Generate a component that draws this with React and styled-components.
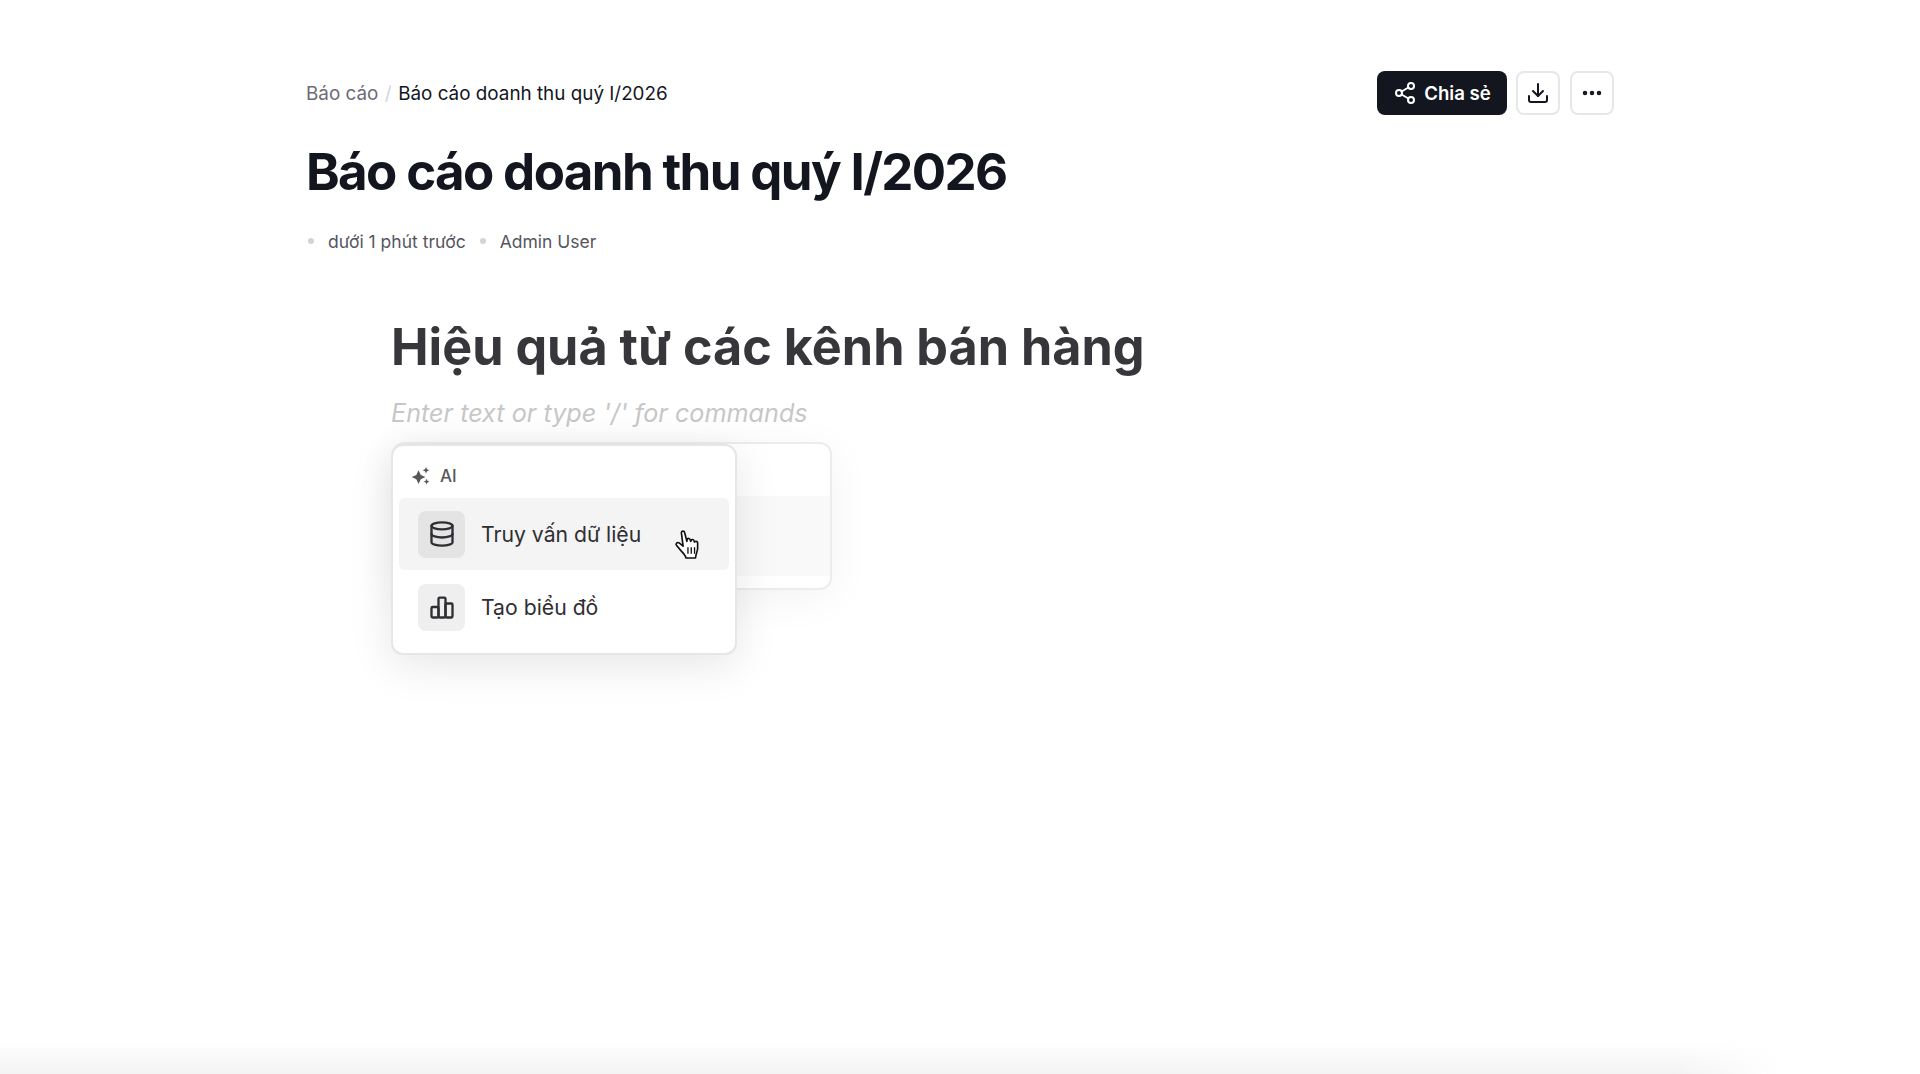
import React from "react";
import styled, { createGlobalStyle } from "styled-components";
import { Share2, Download, Ellipsis, Database } from "lucide-react";

const GlobalStyle = createGlobalStyle`
  html, body {
    margin: 0;
    padding: 0;
    background: #fff;
    font-family: Inter, "Noto Sans", sans-serif;
  }
`;

const Page = styled.div`
  position: relative;
  height: 1074px;
  overflow: hidden;
  padding: 71px 306px 0;
  box-sizing: border-box;
  background: #fff;
`;

const TopBar = styled.div`
  display: flex;
  justify-content: space-between;
  align-items: center;
  height: 44px;
`;

const Breadcrumb = styled.div`
  display: flex;
  align-items: center;
  gap: 6.5px;
  font-size: 18.85px;
  color: #6b6b76;
`;

const Separator = styled.span`
  color: #d1d5db;
`;

const Current = styled.span`
  color: #13151f;
`;

const Actions = styled.div`
  display: flex;
  gap: 10px;
`;

const ShareButton = styled.button`
  display: flex;
  align-items: center;
  justify-content: center;
  gap: 7px;
  width: 130px;
  height: 44px;
  margin-right: -1px;
  border: 0;
  border-radius: 8px;
  background: #13151f;
  color: #fff;
  font: 600 18.6px Inter, sans-serif;
`;

const IconButton = styled.button`
  display: flex;
  align-items: center;
  justify-content: center;
  width: 44px;
  height: 44px;
  padding: 0;
  border: 2px solid #e5e7eb;
  border-radius: 8px;
  background: #fff;
  color: #13151f;
`;

const Title = styled.h1`
  margin: 27px 0 0;
  font-size: 51px;
  line-height: 60px;
  font-weight: 700;
  letter-spacing: -0.032em;
  color: #13151f;
`;

const Meta = styled.div`
  display: flex;
  align-items: center;
  margin-top: 27px;
  height: 24px;
  font-size: 17.5px;
  color: #55555f;
`;

const Dot = styled.span`
  width: 6px;
  height: 6px;
  margin: 0 ${(p) => p.$after}px 0 ${(p) => p.$before}px;
  border-radius: 50%;
  background: #d1d5db;
`;

const Editor = styled.div`
  padding: 58px 0 0 85px;
`;

const Heading = styled.h2`
  margin: 0;
  font-size: 50.3px;
  line-height: 72px;
  font-weight: 700;
  color: #37363a;
`;

const Placeholder = styled.div`
  margin-top: 14px;
  font-size: 25.2px;
  line-height: 32px;
  font-style: italic;
  color: #c7c7c7;
`;

const MenuArea = styled.div`
  position: relative;
  margin-top: 15px;
  width: 346px;
`;

const BackCard = styled.div`
  position: absolute;
  left: 1px;
  top: -2px;
  width: 440px;
  height: 148px;
  box-sizing: border-box;
  border: 2px solid #ececec;
  border-radius: 12px;
  background: linear-gradient(#fff 0 36%, #f9f9f9 36% 92%, #fff 92%);
  box-shadow: 0 8px 44px rgba(0, 0, 0, 0.05);
`;

const Menu = styled.div`
  position: relative;
  box-sizing: border-box;
  height: 211px;
  padding: 0 6px;
  border: 2px solid #e6e6e6;
  border-radius: 12px;
  background: #fff;
  box-shadow: 0 10px 44px rgba(0, 0, 0, 0.1);
`;

const MenuLabel = styled.div`
  display: flex;
  align-items: center;
  gap: 9px;
  box-sizing: border-box;
  height: 52px;
  padding: 8px 0 0 12px;
  font-size: 17px;
  font-weight: 500;
  color: #57575c;
`;

const Item = styled.div`
  display: flex;
  align-items: center;
  gap: 16px;
  height: 72px;
  padding-left: 19px;
  border-radius: 6px;
  font-size: 21.2px;
  color: #2f2e33;
  background: ${(p) => (p.$active ? "#f4f4f4" : "transparent")};

  & + & {
    margin-top: 1px;
  }
`;

const ItemIcon = styled.div`
  display: flex;
  align-items: center;
  justify-content: center;
  width: 47px;
  height: 47px;
  border-radius: 8px;
  background: ${(p) => (p.$active ? "#e4e4e5" : "#efefef")};
  color: #2f2e33;
`;

const Cursor = styled.svg`
  position: absolute;
  left: 283px;
  top: 85px;
`;

const BottomFade = styled.div`
  position: absolute;
  left: 0;
  bottom: 0;
  width: 1780px;
  height: 34px;
  background: linear-gradient(rgba(243, 243, 243, 0), #f3f3f3);
  mask-image: linear-gradient(to right, #000 94%, transparent);
`;

const SparkleIcon = () => (
  <svg width="20" height="20" viewBox="0 0 18 18" fill="#57575c">
    <path d="M6.800 3.800 8.800 8 13 10 8.800 12 6.800 16.200 4.800 12 .6 10 4.800 8Z" />
    <path d="M13.500 .8 14.400 2.900 16.500 3.800 14.400 4.700 13.500 6.800 12.600 4.700 10.500 3.800 12.600 2.900Z" />
    <path d="M14 11.500 14.800 13.300 16.600 14.100 14.800 14.900 14 16.700 13.200 14.900 11.400 14.100 13.200 13.300Z" />
  </svg>
);

const BarsIcon = () => (
  <svg width="28" height="28" viewBox="0 0 24 24" fill="none" stroke="currentColor" strokeWidth="2" strokeLinejoin="round">
    <rect x="3" y="12" width="6" height="9" rx="1" />
    <rect x="9" y="4" width="6" height="17" rx="1" />
    <rect x="15" y="9" width="6" height="12" rx="1" />
  </svg>
);

export default function App() {
  return (
    <Page>
      <GlobalStyle />
      <TopBar>
        <Breadcrumb>
          <span>Báo cáo</span>
          <Separator>/</Separator>
          <Current>Báo cáo doanh thu quý I/2026</Current>
        </Breadcrumb>
        <Actions>
          <ShareButton>
            <Share2 size={24} strokeWidth={2} />
            Chia sẻ
          </ShareButton>
          <IconButton>
            <Download size={24} strokeWidth={2} />
          </IconButton>
          <IconButton>
            <Ellipsis size={24} strokeWidth={2.5} />
          </IconButton>
        </Actions>
      </TopBar>
      <Title>Báo cáo doanh thu quý I/2026</Title>
      <Meta>
        <Dot $before={2} $after={14} />
        dưới 1 phút trước
        <Dot $before={14} $after={14} />
        Admin User
      </Meta>
      <Editor>
        <Heading>Hiệu quả từ các kênh bán hàng</Heading>
        <Placeholder>Enter text or type '/' for commands</Placeholder>
        <MenuArea>
          <BackCard />
          <Menu>
            <MenuLabel>
              <SparkleIcon />
              AI
            </MenuLabel>
            <Item $active>
              <ItemIcon $active>
                <Database size={28} strokeWidth={2} />
              </ItemIcon>
              Truy vấn dữ liệu
            </Item>
            <Item>
              <ItemIcon>
                <BarsIcon />
              </ItemIcon>
              Tạo biểu đồ
            </Item>
          </Menu>
          <Cursor width="29" height="33" viewBox="0 0 26 30">
            <path
              d="M6.500 3.200c0-1.600 2.600-1.900 3 0l2 8 .3-1.600c.4-1.500 2.600-1.300 2.800.3l.4 1.300.4-.8c.5-1.300 2.500-1 2.700.4l.3 1 .5-.3c1-.6 2.300 0 2.400 1.200.3 3.500.1 6.700-1 9.300-.6 1.600-.8 3-.9 4.400H10.800c-.5-2.200-2.300-4.300-4.300-6.300L2.200 15c-1.300-1.500.6-3.500 2.300-2.300l3.600 2.900Z"
              fill="#fff"
              stroke="#111"
              strokeWidth="1.500"
              strokeLinejoin="round"
            />
            <path d="M12.500 16.500v6M15.500 16.500v6M18.500 16.500v6" stroke="#111" strokeWidth="1.200" />
          </Cursor>
        </MenuArea>
      </Editor>
      <BottomFade />
    </Page>
  );
}
